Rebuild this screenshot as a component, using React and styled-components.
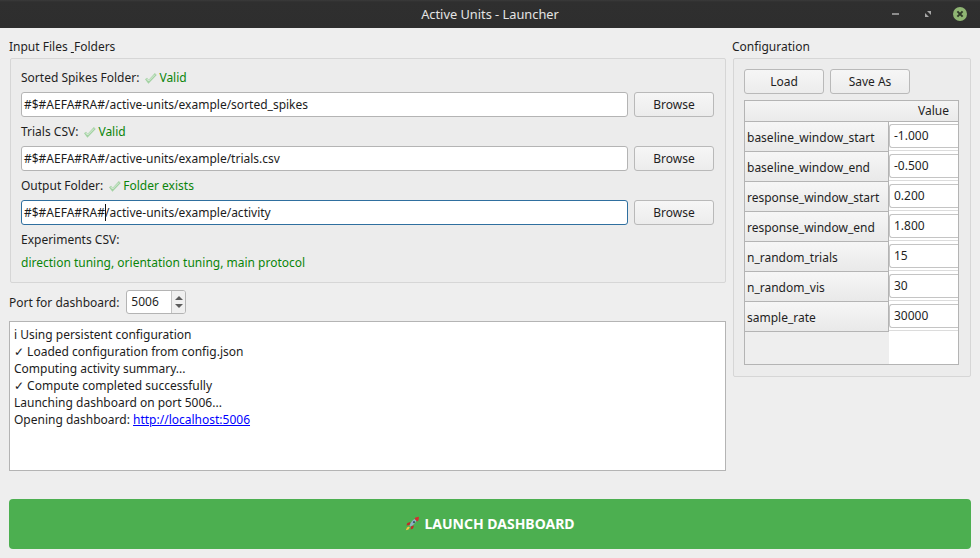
import React from 'react'
import styled, { createGlobalStyle } from 'styled-components'

const GlobalStyle = createGlobalStyle`
    html, body {
        margin: 0;
        padding: 0;
        background: #eeeeee;
    }
    body {
        font-family: "Noto Sans", "Open Sans", sans-serif;
        font-size: 12px;
        color: #1f1f1f;
    }
`

const Window = styled.div`
    width: 980px;
    height: 558px;
    display: flex;
    flex-direction: column;
    overflow: hidden;
`

const TitleBar = styled.div`
    height: 28px;
    flex: none;
    background: linear-gradient(#3a3a3a 0, #2f2f2f 2px, #2e2e2e 100%);
    display: flex;
    align-items: center;
    justify-content: center;
    position: relative;
    color: #e4e4e4;
    font-size: 12.8px;
`

const WindowButtons = styled.div`
    position: absolute;
    right: 13px;
    top: 7px;
    display: flex;
    align-items: center;
    gap: 19px;
`

const Body = styled.div`
    flex: 1;
    display: flex;
    flex-direction: column;
    padding: 11px 8px 9px 9px;
    min-height: 0;
`

const Columns = styled.div`
    display: flex;
    gap: 7px;
    align-items: flex-start;
`

const LeftColumn = styled.div`
    width: 717px;
    flex: none;
    display: flex;
    flex-direction: column;
`

const RightColumn = styled.div`
    width: 238px;
    flex: none;
    display: flex;
    flex-direction: column;
`

const GroupTitle = styled.div`
    height: 19px;
    line-height: 17px;
    white-space: pre;
    margin-top: -1px;
    margin-bottom: 1px;
    margin-left: ${p => p.$shift || 0}px;
`

const GroupBox = styled.div`
    box-sizing: border-box;
    border: 1px solid #d6d6d6;
    border-radius: 2px;
    background: #ececec;
    margin-left: ${p => p.$inset || 0}px;
`

const FilesBox = styled(GroupBox)`
    height: 225px;
    padding: 10px 11px 0 10px;
    display: flex;
    flex-direction: column;
`

const LabelRow = styled.div`
    height: 17px;
    line-height: 17px;
    margin-bottom: 6px;
    display: flex;
    align-items: center;
    white-space: pre;
`

const Status = styled.span`
    color: #0a850a;
    display: inline-flex;
    align-items: center;
    gap: 2px;
    margin-left: 6px;
`

const InputRow = styled.div`
    display: flex;
    gap: 6px;
    height: 25px;
    margin-bottom: 6px;
`

const TextBox = styled.div`
    box-sizing: border-box;
    flex: 1;
    border: 1px solid ${p => (p.$focused ? '#2f6f9f' : '#b4b4b4')};
    border-radius: 3px;
    background: #fff;
    padding: 0 3px 0 2px;
    line-height: 23px;
    white-space: pre;
    color: #1c1c1c;
    position: relative;
`

const Caret = styled.span`
    display: inline-block;
    width: 1px;
    height: 17px;
    margin: 0 -1px 0 0;
    background: #111;
    vertical-align: -4px;
`

const Button = styled.div`
    box-sizing: border-box;
    width: 80px;
    height: 25px;
    flex: none;
    border: 1px solid #b9b9b9;
    border-radius: 3px;
    background: linear-gradient(#f6f6f6, #ececec);
    display: flex;
    align-items: center;
    justify-content: center;
`

const ExperimentLabel = styled.div`
    height: 17px;
    line-height: 17px;
    margin-top: 0;
`

const ExperimentList = styled.div`
    height: 17px;
    line-height: 17px;
    margin-top: 6px;
    color: #0a850a;
`

const PortRow = styled.div`
    display: flex;
    align-items: center;
    gap: 7px;
    height: 24px;
    margin-top: 7px;
`

const SpinBox = styled.div`
    box-sizing: border-box;
    width: 60px;
    height: 24px;
    border: 1px solid #b4b4b4;
    border-radius: 3px;
    background: #fff;
    display: flex;
`

const SpinValue = styled.div`
    flex: 1;
    padding-left: 4px;
    line-height: 22px;
`

const SpinArrows = styled.div`
    width: 13px;
    border-left: 1px solid #c4c4c4;
    background: #f0f0f0;
    display: flex;
    flex-direction: column;
    align-items: center;
    justify-content: center;
    gap: 4px;
    border-radius: 0 2px 2px 0;
`

const Arrow = styled.span`
    width: 0;
    height: 0;
    border-left: 4px solid transparent;
    border-right: 4px solid transparent;
    ${p => (p.$down ? 'border-top: 4px solid #5c5c5c;' : 'border-bottom: 4px solid #5c5c5c;')}
`

const LogBox = styled.div`
    box-sizing: border-box;
    height: 150px;
    margin-top: 7px;
    border: 1px solid #b4b4b4;
    background: #fff;
    padding: 4px 4px;
    line-height: 17px;
    color: #1c1c1c;
`

const LogLink = styled.a`
    color: #0000ff;
    text-decoration: underline;
`

const ConfigBox = styled(GroupBox)`
    height: 319px;
    padding: 10px 11px 11px 10px;
    display: flex;
    flex-direction: column;
`

const ConfigButtons = styled.div`
    display: flex;
    gap: 6px;
    height: 25px;
    margin-bottom: 6px;
`

const Table = styled.div`
    box-sizing: border-box;
    flex: 1;
    border: 1px solid #b4b4b4;
    display: flex;
    flex-direction: column;
    background: #fff;
`

const TableHeader = styled.div`
    height: 21px;
    flex: none;
    box-sizing: border-box;
    border-bottom: 1px solid #b4b4b4;
    background: linear-gradient(#f4f4f4, #eaeaea);
    text-align: right;
    padding-right: 9px;
    line-height: 20px;
`

const TableRow = styled.div`
    height: 30px;
    flex: none;
    display: flex;
    align-items: flex-start;
`

const RowHeader = styled.div`
    box-sizing: border-box;
    width: 144px;
    height: 30px;
    flex: none;
    border-right: 1px solid #b4b4b4;
    border-bottom: 1px solid #b4b4b4;
    background: linear-gradient(#f6f6f6, #e9e9e9);
    padding-left: 2px;
    line-height: 31px;
`

const ValueCell = styled.div`
    box-sizing: border-box;
    flex: 1;
    height: 29px;
    padding: 2px 0;
    display: flex;
    min-width: 0;
    border-bottom: 1px solid #dcdcdc;
`

const ValueInput = styled.div`
    box-sizing: border-box;
    flex: 1;
    border: 1px solid #c4c4c4;
    border-right: none;
    border-radius: 3px 0 0 3px;
    background: #fff;
    padding-left: 4px;
    line-height: 22px;
`

const TableFiller = styled.div`
    flex: 1;
    display: flex;
`

const FillerSide = styled.div`
    width: 144px;
    background: #eeeeee;
`

const LaunchButton = styled.div`
    box-sizing: border-box;
    height: 50px;
    margin-top: 28px;
    width: 962px;
    flex: none;
    padding-bottom: 1px;
    border-radius: 4px;
    background: #4caf50;
    color: #fff;
    font-weight: 700;
    font-size: 14px;
    display: flex;
    align-items: center;
    justify-content: center;
    gap: 4px;
`

const CheckIcon = () => (
    <svg width="12" height="12" viewBox="0 0 12 12" fill="none">
        <path d="M1 6.5 L3.5 9.8 L10.8 2" stroke="#a3d2a3" strokeWidth="2.6" />
        <path d="M1.6 6.8 L3.6 9 L10 2.6" stroke="#e3f1e3" strokeWidth="0.9" />
    </svg>
)

const RocketIcon = () => (
    <svg width="15" height="15" viewBox="0 0 15 15">
        <path d="M5.4 6 L2.4 7 L1.4 9.4 L4.6 9 Z" fill="#c62828" />
        <path d="M9 9.6 L8 12.6 L5.6 13.6 L6 10.4 Z" fill="#c62828" />
        <path d="M4 10.4 L2 11.6 L0.8 14.2 L3.4 13.4 L4.8 11.4 Z" fill="#f4c542" />
        <path d="M4.6 9.8 C5.4 6.4 8.4 3 11.4 2.6 C11.8 6 8.6 9.4 5.2 10.6 Z" fill="#8fb0c4" />
        <path d="M10.4 1.6 L14 0.8 L13.4 4.4 L12.2 5.4 L9.6 3 Z" fill="#d32f2f" />
        <circle cx="9" cy="6.2" r="1.1" fill="#39586c" />
    </svg>
)

const config = [
    ['baseline_window_start', '-1.000'],
    ['baseline_window_end', '-0.500'],
    ['response_window_start', '0.200'],
    ['response_window_end', '1.800'],
    ['n_random_trials', '15'],
    ['n_random_vis', '30'],
    ['sample_rate', '30000'],
]

const App = () => (
    <Window>
        <GlobalStyle />
        <TitleBar>
            Active Units - Launcher
            <WindowButtons>
                <svg width="14" height="14" viewBox="0 0 14 14">
                    <rect x="5" y="6" width="7" height="2" fill="#8c8c8c" />
                </svg>
                <svg width="14" height="14" viewBox="0 0 14 14">
                    <path d="M7 4 H11 V8 Z" fill="#a8a8a8" />
                    <path d="M5 6 L9 10 H5 Z" fill="#a8a8a8" />
                </svg>
                <svg width="14" height="14" viewBox="0 0 14 14">
                    <circle cx="7" cy="7" r="7" fill="#8fb573" />
                    <path d="M4.4 4.4 L9.6 9.6 M9.6 4.4 L4.4 9.6" stroke="#2f3a28" strokeWidth="2" />
                </svg>
            </WindowButtons>
        </TitleBar>
        <Body>
            <Columns>
                <LeftColumn>
                    <GroupTitle>Input Files <u> </u>Folders</GroupTitle>
                    <FilesBox $inset={1}>
                        <LabelRow>
                            Sorted Spikes Folder:
                            <Status><CheckIcon />Valid</Status>
                        </LabelRow>
                        <InputRow>
                            <TextBox>#$#AEFA#RA#/active-units/example/sorted_spikes</TextBox>
                            <Button>Browse</Button>
                        </InputRow>
                        <LabelRow>
                            Trials CSV:
                            <Status><CheckIcon />Valid</Status>
                        </LabelRow>
                        <InputRow>
                            <TextBox>#$#AEFA#RA#/active-units/example/trials.csv</TextBox>
                            <Button>Browse</Button>
                        </InputRow>
                        <LabelRow>
                            Output Folder:
                            <Status><CheckIcon />Folder exists</Status>
                        </LabelRow>
                        <InputRow>
                            <TextBox $focused>#$#AEFA#RA#<Caret />/active-units/example/activity</TextBox>
                            <Button>Browse</Button>
                        </InputRow>
                        <ExperimentLabel>Experiments CSV:</ExperimentLabel>
                        <ExperimentList>direction tuning, orientation tuning, main protocol</ExperimentList>
                    </FilesBox>
                    <PortRow>
                        Port for dashboard:
                        <SpinBox>
                            <SpinValue>5006</SpinValue>
                            <SpinArrows>
                                <Arrow />
                                <Arrow $down />
                            </SpinArrows>
                        </SpinBox>
                    </PortRow>
                    <LogBox>
                        <div>i Using persistent configuration</div>
                        <div>✓ Loaded configuration from config.json</div>
                        <div>Computing activity summary...</div>
                        <div>✓ Compute completed successfully</div>
                        <div>Launching dashboard on port 5006...</div>
                        <div>Opening dashboard: <LogLink href="#">http://localhost:5006</LogLink></div>
                    </LogBox>
                </LeftColumn>
                <RightColumn>
                    <GroupTitle $shift={-1}>Configuration</GroupTitle>
                    <ConfigBox>
                        <ConfigButtons>
                            <Button>Load</Button>
                            <Button>Save As</Button>
                        </ConfigButtons>
                        <Table>
                            <TableHeader>Value</TableHeader>
                            {config.map(([name, value]) => (
                                <TableRow key={name}>
                                    <RowHeader>{name}</RowHeader>
                                    <ValueCell>
                                        <ValueInput>{value}</ValueInput>
                                    </ValueCell>
                                </TableRow>
                            ))}
                            <TableFiller>
                                <FillerSide />
                            </TableFiller>
                        </Table>
                    </ConfigBox>
                </RightColumn>
            </Columns>
            <LaunchButton>
                <RocketIcon />
                LAUNCH DASHBOARD
            </LaunchButton>
        </Body>
    </Window>
)

export default App
